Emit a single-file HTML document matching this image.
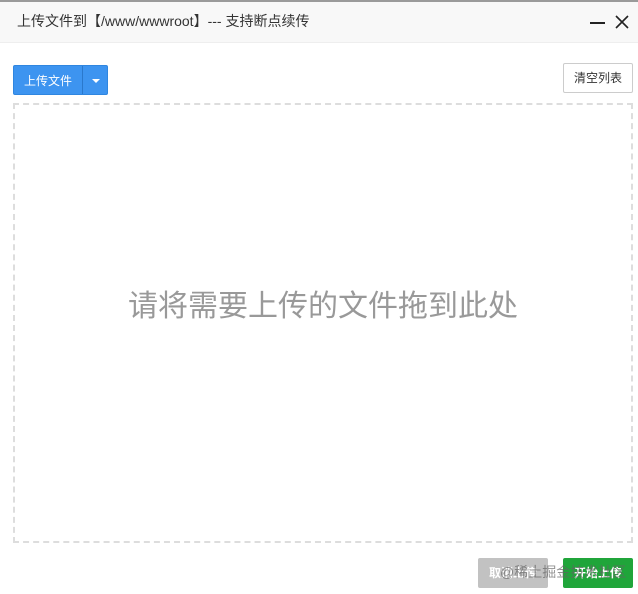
<!DOCTYPE html>
<html><head><meta charset="utf-8"><style>
*{margin:0;padding:0;box-sizing:border-box}
body{width:638px;height:594px;background:#fff;position:relative;overflow:hidden;font-family:"Liberation Sans","Noto Sans CJK SC",sans-serif}
.top{position:absolute;left:0;top:0;width:638px;height:2px;background:#9a9a9a}
.hd{position:absolute;left:0;top:2px;width:638px;height:41px;background:#f8f8f8;border-bottom:1px solid #eee;font-size:14px;color:#333;line-height:38px;padding-left:17px}
.min{position:absolute;left:590px;top:22px;width:15px;height:2px;background:#222}
.x{position:absolute;left:614px;top:14px}
.up{position:absolute;left:13px;top:65px;width:95px;height:30px;background:#3d94f0;border:1px solid #2f86e0;border-radius:2px;color:#fff;font-size:12px;line-height:30px}
.up span{position:absolute;left:10px}
.up i{position:absolute;left:68px;top:0;width:1px;height:28px;background:#2a78cc}
.up b{position:absolute;left:78px;top:13px;border-left:4px solid transparent;border-right:4px solid transparent;border-top:4px solid #fff}
.clr{position:absolute;left:563px;top:63px;width:70px;height:30px;border:1px solid #ccc;border-radius:2px;font-size:12px;color:#333;line-height:28px;text-align:center;background:#fff}
.box{position:absolute;left:13px;top:103px;width:620px;height:440px;border:2px dashed #ddd}
.tip{position:absolute;left:0;top:287px;width:646px;text-align:center;font-size:30px;color:#999;line-height:40px}
.b1,.b2{position:absolute;top:558px;width:70px;height:30px;border-radius:2px;color:#fff;font-size:12px;line-height:30px;text-align:center;font-weight:bold}
.b1{left:478px;background:#c2c2c2}
.b2{left:563px;background:#20a53a}
.wm{position:absolute;left:500px;top:562px;font-size:14px;color:rgba(100,100,100,.7);z-index:5;white-space:nowrap}
</style></head><body>
<div class="top"></div>
<div class="hd">上传文件到【/www/wwwroot】--- 支持断点续传</div>
<div class="min"></div>
<svg class="x" width="16" height="16" viewBox="0 0 16 16"><path d="M2 2L14 14M14 2L2 14" stroke="#222" stroke-width="1.6"/></svg>
<div class="up"><span>上传文件</span><i></i><b></b></div>
<div class="clr">清空列表</div>
<div class="box"></div>
<div class="tip">请将需要上传的文件拖到此处</div>
<div class="b1">取消上传</div>
<div class="b2">开始上传</div>
<div class="wm">@稀土掘金技术社区</div>
</body></html>
